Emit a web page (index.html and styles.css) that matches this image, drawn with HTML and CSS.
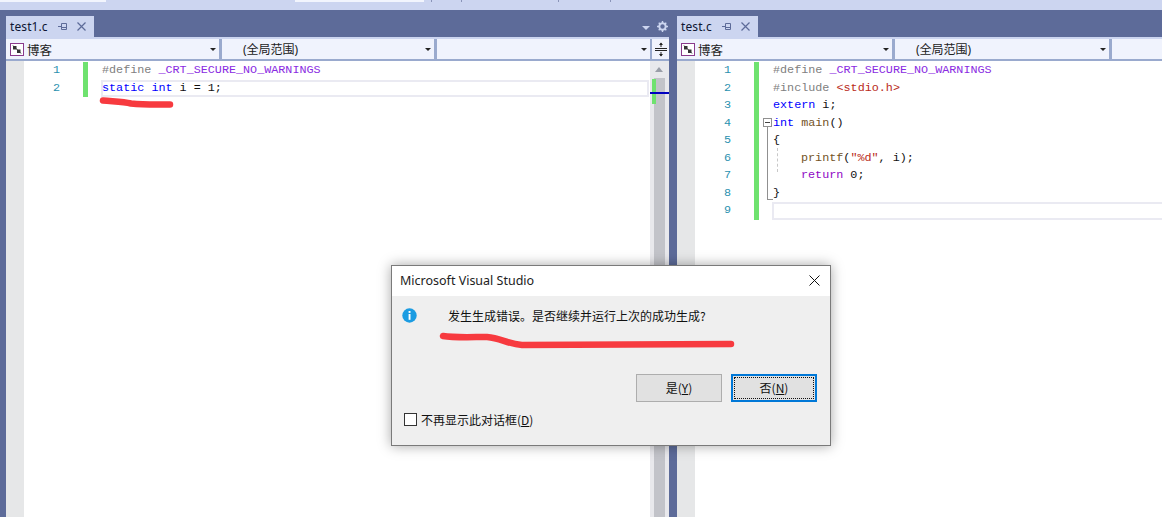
FILE: index.html
```html
<!DOCTYPE html>
<html lang="zh-CN">
<head>
<meta charset="utf-8">
<title>Visual Studio</title>
<link rel="stylesheet" href="styles.css">
</head>
<body>
<div class="top-strip">
  <span class="chip chip-a"></span>
  <span class="chip chip-b"></span>
  <span class="tick tick-a"></span>
  <span class="tick tick-b"></span>
  <span class="tick tick-c"></span>
  <span class="tick tick-d"></span>
</div>
<main class="workspace">
  <section class="pane pane-left">
    <div class="tabbar">
      <div class="tab tab-left"><span class="tab-name">test1.c</span>
        <svg class="pin" width="10" height="9" viewBox="0 0 10 9"><path d="M0 4.5h3M3.5 1.5v6M3.5 1.5h5v6h-5M3.5 5.5h5" fill="none" stroke="#5d6b99"/></svg>
        <svg class="tab-x" width="9" height="9" viewBox="0 0 9 9"><path d="M.5.5l8 8M8.5.5l-8 8" stroke="#5d6b99" stroke-width="1.2"/></svg>
      </div>
      <div class="tab-tools">
        <span class="tri-light"></span>
        <svg width="11" height="11" viewBox="0 0 11 11"><circle cx="5.5" cy="5.5" r="3.2" fill="none" stroke="#ccd5f0" stroke-width="2"/><path d="M5.5 0v11M0 5.5h11M1.7 1.7l7.6 7.6M9.3 1.7l-7.6 7.6" stroke="#ccd5f0" stroke-width="1.4" stroke-dasharray="2 7"/></svg>
      </div>
    </div>
    <div class="navbar">
      <div class="combo combo-a combo-a-l"><svg class="cls-icon" width="14" height="13" viewBox="0 0 14 13"><rect x=".5" y=".5" width="13" height="12" fill="#fff" stroke="#8a3a8c"/><path d="M3 3h3.500v3.500H3zM7 6.500h3.500V10H7z" fill="#333"/><path d="M3 2.500l8 8" stroke="#333"/></svg><span class="combo-text">博客</span><span class="tri"></span></div>
      <div class="combo combo-b"><span class="combo-scope">(全局范围)</span><span class="tri"></span></div>
      <div class="combo combo-c"><span class="tri"></span></div>
      <div class="split-btn"><svg width="12" height="15" viewBox="0 0 12 15"><path d="M0 6.500h12M0 8.500h12" stroke="#222"/><path d="M6 1v4M6 10v4" stroke="#222"/><path d="M4 3l2-2.500 2 2.500zM4 12l2 2.500 2-2.500z" fill="#222"/></svg></div>
    </div>
    <div class="editor-row">
      <div class="editor">
        <div class="glyph-margin"></div>
        <div class="line-nums"><div>1</div><div>2</div></div>
        <div class="changes changes-2"></div>
        <div class="code">
          <div class="ln"><span class="pp">#define</span> <span class="mac">_CRT_SECURE_NO_WARNINGS</span></div>
          <div class="ln current"><span class="kw">static</span> <span class="kw">int</span> i = 1;</div>
        </div>
      </div>
      <div class="scrollbar">
        <span class="tri-up"></span>
        <div class="thumb"><div class="mark"></div><div class="caret"></div></div>
      </div>
    </div>
  </section>
  <section class="pane pane-right">
    <div class="tabbar">
      <div class="tab tab-right"><span class="tab-name">test.c</span>
        <svg class="pin" width="10" height="9" viewBox="0 0 10 9"><path d="M0 4.500h3M3.500 1.500v6M3.500 1.500h5v6h-5M3.500 5.500h5" fill="none" stroke="#5d6b99"/></svg>
        <svg class="tab-x" width="9" height="9" viewBox="0 0 9 9"><path d="M.5.5l8 8M8.500.5l-8 8" stroke="#5d6b99" stroke-width="1.200"/></svg>
      </div>
    </div>
    <div class="navbar">
      <div class="combo combo-a combo-a-r"><svg class="cls-icon" width="14" height="13" viewBox="0 0 14 13"><rect x=".5" y=".5" width="13" height="12" fill="#fff" stroke="#8a3a8c"/><path d="M3 3h3.500v3.500H3zM7 6.500h3.500V10H7z" fill="#333"/><path d="M3 2.500l8 8" stroke="#333"/></svg><span class="combo-text">博客</span><span class="tri"></span></div>
      <div class="combo combo-b"><span class="combo-scope">(全局范围)</span><span class="tri"></span></div>
      <div class="combo combo-last"></div>
    </div>
    <div class="editor-row">
      <div class="editor editor-right">
        <div class="glyph-margin"></div>
        <div class="line-nums"><div>1</div><div>2</div><div>3</div><div>4</div><div>5</div><div>6</div><div>7</div><div>8</div><div>9</div></div>
        <div class="changes changes-9"></div>
        <div class="fold"><span class="fold-box"></span><span class="fold-line"></span></div>
        <div class="code">
          <div class="ln"><span class="pp">#define</span> <span class="mac">_CRT_SECURE_NO_WARNINGS</span></div>
          <div class="ln"><span class="pp">#include</span> <span class="str">&lt;stdio.h&gt;</span></div>
          <div class="ln"><span class="kw">extern</span> i;</div>
          <div class="ln"><span class="kw">int</span> <span class="fn">main</span>()</div>
          <div class="ln">{</div>
          <div class="ln ind"><span class="fn">printf</span>(<span class="str">"%d"</span>, i);</div>
          <div class="ln ind"><span class="ctl">return</span> 0;</div>
          <div class="ln">}</div>
          <div class="ln current"></div>
        </div>
        <span class="guide"></span>
      </div>
    </div>
  </section>
</main>

<div class="dialog" role="dialog">
  <header class="dialog-title"><span>Microsoft Visual Studio</span>
    <svg width="11" height="11" viewBox="0 0 11 11"><path d="M.5.5l10 10M10.500.5l-10 10" stroke="#111" stroke-width="1"/></svg>
  </header>
  <div class="dialog-body">
    <div class="message">
      <svg class="info" width="15" height="15" viewBox="0 0 15 15"><circle cx="7.500" cy="7.500" r="7.200" fill="#1b9ce2"/><rect x="6.600" y="3" width="1.900" height="1.900" fill="#fff"/><rect x="6.600" y="6" width="1.900" height="5.800" fill="#fff"/></svg>
      <span>发生生成错误。是否继续并运行上次的成功生成?</span>
    </div>
    <div class="buttons">
      <button class="btn"><span class="btn-label">是(<u>Y</u>)</span></button>
      <button class="btn btn-default"><span class="focus"><span class="btn-label">否(<u>N</u>)</span></span></button>
    </div>
    <label class="dont-show"><span class="check"></span><span>不再显示此对话框(<u>D</u>)</span></label>
  </div>
</div>

<svg class="scribble scribble-a" width="80" height="14" viewBox="0 0 80 14"><path d="M4 3.500C14 4.500 24 4.500 32 6.500 46 8 58 7.500 71 7.500" fill="none" stroke="#f73a3f" stroke-width="6.500" stroke-linecap="round"/></svg>
<svg class="scribble scribble-b" width="304" height="22" viewBox="0 0 304 22"><path d="M6 7C18 9 36 8 50 8 64 9 70 15 85 16L294 15" fill="none" stroke="#f73a3f" stroke-width="6.500" stroke-linecap="round"/></svg>
</body>
</html>
```
FILE: styles.css
```css
* { box-sizing: border-box; }
html, body { margin: 0; height: 517px; overflow: hidden; }
body {
  position: relative;
  display: flex;
  flex-direction: column;
  background: #ccd5f0;
  font-family: "Noto Sans", "Noto Sans CJK SC", sans-serif;
  font-size: 12px;
  color: #111;
}
.top-strip {
  height: 10px;
  flex: none;
  display: flex;
  align-items: flex-start;
  background: #ccd5f0;
}
.chip { height: 2px; background: #f2f5fd; }
.chip-a { width: 106px; }
.chip-b { width: 129px; margin-left: 189px; }
.tick { width: 1px; height: 2px; background: #8a94b8; }
.tick-a { margin-left: 7px; }
.tick-b { margin-left: 29px; }
.tick-c { margin-left: 96px; }
.tick-d { margin-left: 51px; }
.workspace {
  flex: 1;
  display: flex;
  gap: 8px;
  padding-left: 6px;
  min-height: 0;
  background: #5d6b99;
}
.pane { display: flex; flex-direction: column; min-width: 0; }
.pane-left { width: 663px; flex: none; }
.pane-right { flex: 1; }

.tabbar {
  height: 27px;
  flex: none;
  display: flex;
  align-items: flex-end;
  justify-content: space-between;
}
.tab {
  height: 21px;
  display: flex;
  align-items: center;
  padding-left: 4px;
  background: #ccd5f0;
  color: #0e1633;
  font-size: 12px;
}
.tab-left { width: 88px; }
.tab-right { width: 81px; }
.tab-name { letter-spacing: .1px; }
.pin { margin-left: 10px; }
.tab-x { margin-left: 9px; }
.tab-tools {
  height: 21px;
  display: flex;
  align-items: center;
  gap: 7px;
  padding-right: 1px;
}
.tri-light {
  width: 0; height: 0;
  margin-top: 3px;
  border: 4px solid transparent;
  border-top: 4px solid #ccd5f0;
  border-bottom-width: 0;
}

.navbar {
  height: 24px;
  flex: none;
  display: flex;
  gap: 3px;
  padding-top: 2px;
  background: #9aaace;
  box-shadow: inset 0 2px 0 #ccd5f0;
  border-bottom: 2px solid #9aaace;
}
.combo {
  position: relative;
  display: flex;
  align-items: center;
  background: #f0f3fd;
  font-size: 12px;
  color: #222;
}
.combo-a { padding-left: 4px; }
.combo-a-l { width: 213px; }
.combo-a-r { width: 215px; }
.combo-b { width: 212px; padding-left: 21px; }
.pane-right .combo-b { width: 214px; }
.combo-c { width: 213px; }
.combo-last { flex: 1; }
.cls-icon { flex: none; }
.combo-text { margin-left: 3px; font-size: 12.500px; }
.tri {
  position: absolute;
  right: 3px;
  top: 9px;
  width: 0; height: 0;
  border: 3px solid transparent;
  border-top: 3px solid #222;
  border-bottom-width: 0;
}
.split-btn {
  width: 18px;
  margin-left: -2px;
  display: flex;
  align-items: center;
  justify-content: center;
  background: #f0f3fd;
  border-left: 1px solid #9aaace;
}

.editor-row { flex: 1; display: flex; min-height: 0; }
.editor {
  position: relative;
  flex: 1;
  min-width: 0;
  display: flex;
  background: #fff;
  padding-top: 1px;
  font-family: "Liberation Mono", "DejaVu Sans Mono", monospace;
  font-size: 11.750px;
  line-height: 17.500px;
}
.glyph-margin {
  position: absolute;
  left: 0; top: 0; bottom: 0;
  width: 18px;
  background: #e6e7e8;
}
.line-nums {
  position: relative;
  width: 54px;
  flex: none;
  text-align: right;
  color: #2b91af;
}
.changes {
  width: 5px;
  flex: none;
  margin-left: 23px;
  background: #6fe26f;
}
.changes-2 { height: 35px; }
.changes-9 { height: 157.500px; }
.code {
  flex: 1;
  min-width: 0;
  margin-left: 14px;
  color: #111;
}
.ln { height: 17.500px; white-space: pre; }
.ind { padding-left: 28px; }
.current {
  margin-left: -1px;
  padding-left: 1px;
  margin-right: 1px;
  box-shadow: inset 0 0 0 2px #eaeaf2;
}
.editor-right .current { margin-right: -4px; }
.pp { color: #808080; }
.mac { color: #8a2be2; }
.kw { color: #0000ff; }
.str { color: #b92a20; }
.fn { color: #74531f; }
.ctl { color: #8f08c4; }

.fold {
  position: absolute;
  left: 86px;
  top: 57px;
  width: 9px;
}
.fold-box {
  display: block;
  position: relative;
  width: 9px; height: 9px;
  border: 1px solid #909090;
  background: #fff;
}
.fold-box::after {
  content: "";
  position: absolute;
  left: 1px; right: 1px; top: 3px;
  height: 1px;
  background: #444;
}
.fold-line {
  display: block;
  width: 6px;
  height: 73px;
  margin-left: 4px;
  border-left: 1px solid #909090;
  border-bottom: 1px solid #909090;
}
.guide {
  position: absolute;
  left: 100px;
  top: 87px;
  height: 24px;
  border-left: 1px dashed #c8c8c8;
}

.scrollbar {
  position: relative;
  width: 19px;
  flex: none;
  background: #e8e8ec;
  padding: 17px 0 0 4px;
}
.tri-up {
  position: absolute;
  left: 5px; top: 6px;
  width: 0; height: 0;
  border: 4.500px solid transparent;
  border-bottom: 5px solid #9a9ea8;
  border-top-width: 0;
}
.thumb {
  position: relative;
  width: 11px;
  height: 100%;
  background: #c2c3c9;
}
.mark {
  position: absolute;
  left: -2px; top: 1px;
  width: 4px; height: 25px;
  background: #6fe26f;
}
.caret {
  position: absolute;
  left: -4px; top: 14px;
  width: 19px; height: 2px;
  background: #0000c0;
}

.scribble { position: absolute; }
.scribble-a { left: 99px; top: 97px; }
.scribble-b { left: 437px; top: 329px; }

.dialog {
  position: absolute;
  left: 391px;
  top: 265px;
  width: 440px;
  height: 181px;
  display: flex;
  flex-direction: column;
  border: 1px solid #7a7a7a;
  background: #efefef;
  box-shadow: 0 0 12px rgba(0,0,0,.35);
}
.dialog-title {
  height: 30px;
  flex: none;
  display: flex;
  align-items: center;
  justify-content: space-between;
  padding: 0 10px 1px 8px;
  background: #fff;
  font-size: 12.500px;
  color: #222;
}
.dialog-body {
  flex: 1;
  position: relative;
  padding: 9px 13px 0 10px;
  display: flex;
  flex-direction: column;
}
.message {
  display: flex;
  align-items: center;
  gap: 31px;
  height: 20px;
  font-family: "Noto Sans CJK SC", "Noto Sans", sans-serif;
  font-size: 12px;
}
.info { flex: none; }
.buttons {
  display: flex;
  justify-content: flex-end;
  gap: 9px;
  margin-top: 49px;
}
.btn {
  width: 86px;
  height: 28px;
  padding: 0 0 2px;
  background: #e1e1e1;
  border: 1px solid #adadad;
  font-family: "Noto Sans CJK SC", "Noto Sans", sans-serif;
  font-size: 12px;
  color: #111;
}
.btn-default {
  border: 2px solid #0078d7;
  padding: 1px;
}
.focus {
  display: flex;
  align-items: center;
  justify-content: center;
  height: 100%;
  padding-bottom: 2px;
  outline: 1px dotted #111;
  outline-offset: -1px;
}
.dont-show {
  display: flex;
  align-items: center;
  gap: 4px;
  margin: 9px 0 0 2px;
  font-family: "Noto Sans CJK SC", "Noto Sans", sans-serif;
  font-size: 12px;
}
.check {
  width: 13px; height: 13px;
  flex: none;
  border: 1px solid #333;
  background: #fff;
}
```
